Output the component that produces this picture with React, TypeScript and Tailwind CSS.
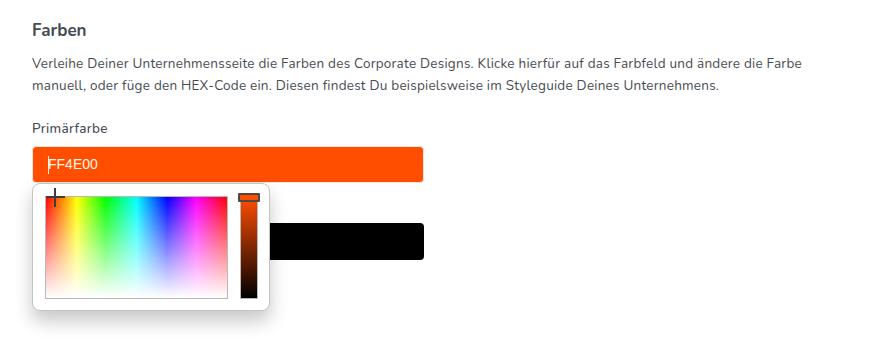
export default function App() {
  return (
    <div className="relative w-[875px] h-[352px] bg-white text-[#474c53] font-['Nunito','Noto_Sans',sans-serif]">
      <div className="pl-8 pt-[19px] w-[875px]">
        <h2 className="text-[17px] font-bold leading-6 text-[#464b52]">Farben</h2>
        <p className="mt-[10px] text-[13.5px] tracking-[0.24px] leading-[22px] w-[778px]">
          Verleihe Deiner Unternehmensseite die Farben des Corporate Designs. Klicke hierfür auf das Farbfeld und ändere die Farbe manuell, oder füge den HEX-Code ein. Diesen findest Du beispielsweise im Styleguide Deines Unternehmens.
        </p>

        <div className="mt-[22px] relative w-[392px]">
          <label className="block text-[13.5px] tracking-[0.3px] leading-5 font-medium">Primärfarbe</label>
          <div className="mt-[7px] h-[37px] rounded bg-[#ff4e00] border border-[#f2e6df] flex items-center pl-[15px] text-[14px] text-[#fff6e8] font-['Liberation_Sans',Arial,sans-serif]">
            <span className="w-px h-[18px] bg-[#fff6e8] mr-[-1px]" />
            FF4E00
          </div>

          <div className="mt-10 h-[37px] rounded bg-black" />

          {/* colour picker popup */}
          <div className="absolute left-0 top-[64px] w-[238px] h-[128px] rounded-lg bg-white border border-[#c4c4c4] shadow-[0_10px_18px_rgba(0,0,0,0.22)] flex pt-3 pl-3 gap-3">
            <div className="relative w-[183px] h-[103px] border border-[#b9b9b9]">
              <div className="absolute inset-0 bg-[linear-gradient(to_right,#ff0000,#ffff00_17%,#00ff00_33%,#00ffff_50%,#0000ff_67%,#ff00ff_83%,#ff0000)]" />
              <div className="absolute inset-0 bg-[linear-gradient(to_bottom,rgba(255,255,255,0),#ffffff)]" />
              <div className="absolute left-0 -top-[9px] w-[19px] h-[19px]">
                <div className="absolute left-[8px] top-0 w-[2px] h-[19px] bg-[#3d3d3d]" />
                <div className="absolute top-[8px] left-0 h-[2px] w-[19px] bg-[#3d3d3d]" />
              </div>
            </div>
            <div className="relative w-[18px] h-[103px] border border-[#b9b9b9] bg-[linear-gradient(to_bottom,#ff4e00,#000000)]">
              <div className="absolute -left-[3px] -top-[4px] w-[22px] h-[9px] border-2 border-[#4a4a4a] bg-[#ff4e00] rounded-[1px]" />
            </div>
          </div>
        </div>
      </div>
    </div>
  );
}
